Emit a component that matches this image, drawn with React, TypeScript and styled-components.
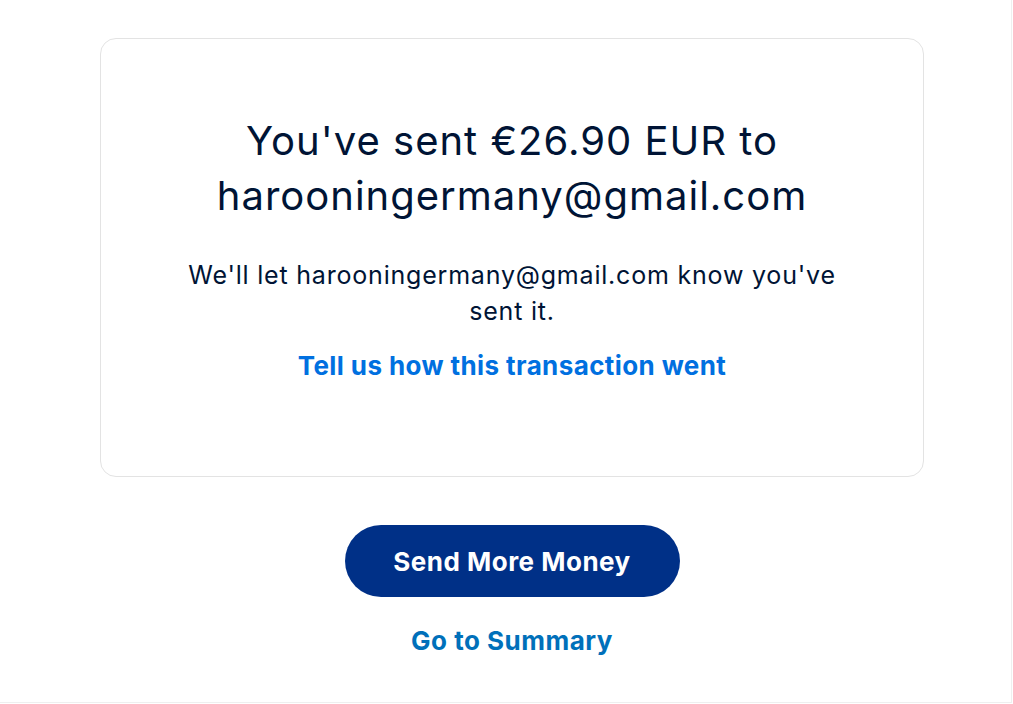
import styled, { createGlobalStyle } from "styled-components";

const GlobalStyle = createGlobalStyle`
  html, body {
    margin: 0;
    padding: 0;
    background: #ffffff;
  }
  body {
    font-family: "Inter", "Liberation Sans", Arial, sans-serif;
    color: #001435;
  }
`;

const App = () => {
  return (
    <Page>
      <GlobalStyle />
      <Column>
        <Card>
          <Title>
            You've sent €26.90 EUR to
            <br />
            harooningermany@gmail.com
          </Title>
          <Message>
            We'll let harooningermany@gmail.com know you've
            <br />
            sent it.
          </Message>
          <FeedbackLink href="#">Tell us how this transaction went</FeedbackLink>
        </Card>
        <PrimaryButton type="button">Send More Money</PrimaryButton>
        <SummaryLink href="#">Go to Summary</SummaryLink>
      </Column>
    </Page>
  );
};

export default App;

const Page = styled.div`
  width: 1012px;
  height: 703px;
  box-sizing: border-box;
  border-right: 1px solid #efefef;
  border-bottom: 1px solid #efefef;
  padding-top: 38px;
  padding-left: 100px;
`;

const Column = styled.div`
  width: 824px;
  display: flex;
  flex-direction: column;
  align-items: center;
`;

const Card = styled.div`
  width: 100%;
  height: 439px;
  box-sizing: border-box;
  border: 1px solid #e3e3e3;
  border-radius: 16px;
  display: flex;
  flex-direction: column;
  align-items: center;
  padding-top: 74px;
`;

const Title = styled.h1`
  margin: 0;
  font-size: 40px;
  font-weight: 400;
  letter-spacing: 1px;
  line-height: 55px;
  text-align: center;
  color: #001435;
`;

const Message = styled.p`
  margin: 34px 0 0;
  font-size: 25px;
  letter-spacing: 0.8px;
  line-height: 36px;
  text-align: center;
  color: #001435;
`;

const FeedbackLink = styled.a`
  margin-top: 21px;
  font-size: 26px;
  font-weight: 700;
  letter-spacing: 0.4px;
  color: #0070e0;
  text-decoration: none;
`;

const PrimaryButton = styled.button`
  margin-top: 48px;
  width: 335px;
  height: 72px;
  border: none;
  border-radius: 36px;
  background: #003087;
  color: #ffffff;
  font-family: inherit;
  font-size: 26px;
  font-weight: 700;
  letter-spacing: 0.5px;
  cursor: pointer;
`;

const SummaryLink = styled.a`
  margin-top: 28px;
  font-size: 26px;
  font-weight: 700;
  letter-spacing: 0.5px;
  color: #0070ba;
  text-decoration: none;
`;
